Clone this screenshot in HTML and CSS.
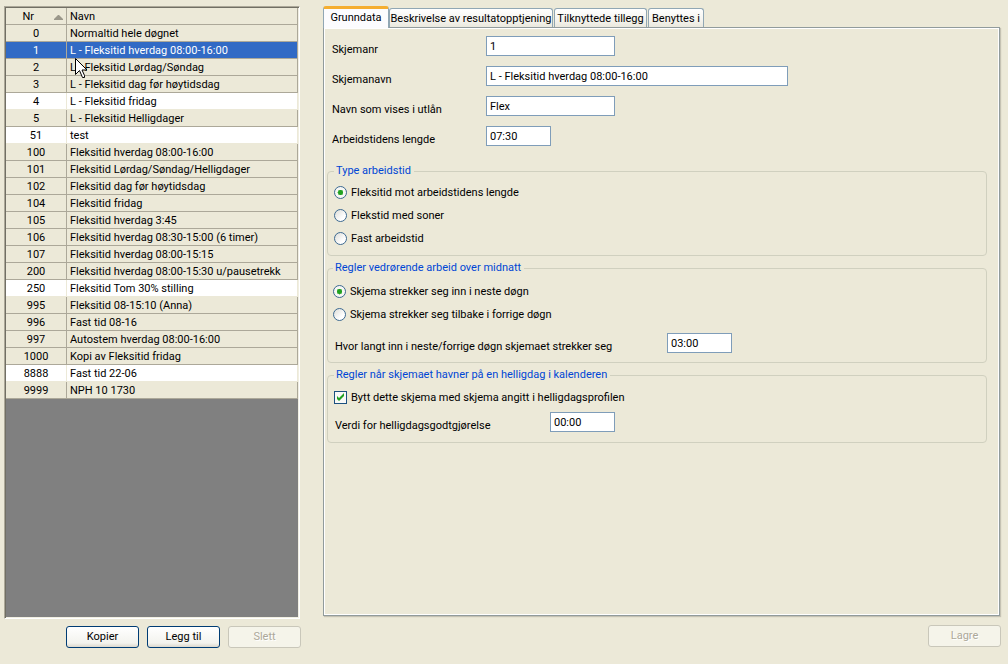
FILE: index.html
```html
<!DOCTYPE html>
<html lang="no">
<head>
<meta charset="utf-8">
<title>Arbeidstidsskjema</title>
<link rel="stylesheet" href="styles.css">
</head>
<body>
<main class="app">
  <section class="list-side">
    <div class="grid-frame">
      <table class="grid">
        <colgroup><col class="col-nr"><col></colgroup>
        <thead>
          <tr><th><span class="sort-head">Nr<svg class="sort" width="9" height="5" viewBox="0 0 9 5"><path d="M4 0h1l4 4v1H0V4z"/></svg></span></th><th class="name">Navn</th></tr>
        </thead>
        <tbody>
          <tr><td>0</td><td>Normaltid hele døgnet</td></tr>
          <tr class="selected"><td>1</td><td>L - Fleksitid hverdag 08:00-16:00</td></tr>
          <tr><td>2</td><td>L - Fleksitid Lørdag/Søndag</td></tr>
          <tr><td>3</td><td>L - Fleksitid dag før høytidsdag</td></tr>
          <tr class="open"><td>4</td><td>L - Fleksitid fridag</td></tr>
          <tr><td>5</td><td>L - Fleksitid Helligdager</td></tr>
          <tr class="open"><td>51</td><td>test</td></tr>
          <tr><td>100</td><td>Fleksitid hverdag 08:00-16:00</td></tr>
          <tr><td>101</td><td>Fleksitid Lørdag/Søndag/Helligdager</td></tr>
          <tr><td>102</td><td>Fleksitid dag før høytidsdag</td></tr>
          <tr><td>104</td><td>Fleksitid fridag</td></tr>
          <tr><td>105</td><td>Fleksitid hverdag 3:45</td></tr>
          <tr><td>106</td><td>Fleksitid hverdag 08:30-15:00 (6 timer)</td></tr>
          <tr><td>107</td><td>Fleksitid hverdag 08:00-15:15</td></tr>
          <tr><td>200</td><td>Fleksitid hverdag 08:00-15:30 u/pausetrekk</td></tr>
          <tr class="open"><td>250</td><td>Fleksitid Tom 30% stilling</td></tr>
          <tr><td>995</td><td>Fleksitid 08-15:10 (Anna)</td></tr>
          <tr><td>996</td><td>Fast tid 08-16</td></tr>
          <tr><td>997</td><td>Autostem hverdag 08:00-16:00</td></tr>
          <tr><td>1000</td><td>Kopi av Fleksitid fridag</td></tr>
          <tr class="open"><td>8888</td><td>Fast tid 22-06</td></tr>
          <tr><td>9999</td><td>NPH 10 1730</td></tr>
        </tbody>
      </table>
    </div>
    <div class="buttons">
      <button type="button">Kopier</button>
      <button type="button">Legg til</button>
      <button type="button" disabled>Slett</button>
    </div>
  </section>

  <section class="detail-side">
    <div class="tabs" role="tablist">
      <button class="tab active" type="button" role="tab" aria-selected="true">Grunndata</button>
      <button class="tab wide" type="button" role="tab">Beskrivelse av resultatopptjening</button>
      <button class="tab medium" type="button" role="tab">Tilknyttede tillegg</button>
      <button class="tab small" type="button" role="tab">Benyttes i</button>
    </div>
    <form class="panel">
      <div class="fields">
        <div class="field"><label for="nr">Skjemanr</label><input class="text mid" id="nr" type="text" value="1"></div>
        <div class="field"><label for="navn">Skjemanavn</label><input class="text long" id="navn" type="text" value="L - Fleksitid hverdag 08:00-16:00"></div>
        <div class="field"><label for="utlan">Navn som vises i utlån</label><input class="text mid" id="utlan" type="text" value="Flex"></div>
        <div class="field"><label for="lengde">Arbeidstidens lengde</label><input class="text" id="lengde" type="text" value="07:30"></div>
      </div>
      <fieldset class="type">
        <legend>Type arbeidstid</legend>
        <label class="choice"><input type="radio" name="type" checked>Fleksitid mot arbeidstidens lengde</label>
        <label class="choice"><input type="radio" name="type">Flekstid med soner</label>
        <label class="choice"><input type="radio" name="type">Fast arbeidstid</label>
      </fieldset>
      <fieldset class="midnight">
        <legend>Regler vedrørende arbeid over midnatt</legend>
        <label class="choice"><input type="radio" name="midnatt" checked>Skjema strekker seg inn i neste døgn</label>
        <label class="choice"><input type="radio" name="midnatt">Skjema strekker seg tilbake i forrige døgn</label>
        <div class="field span"><label for="inn">Hvor langt inn i neste/forrige døgn skjemaet strekker seg</label><input class="text" id="inn" type="text" value="03:00"></div>
      </fieldset>
      <fieldset class="holiday">
        <legend>Regler når skjemaet havner på en helligdag i kalenderen</legend>
        <label class="choice"><input type="checkbox" checked>Bytt dette skjema med skjema angitt i helligdagsprofilen</label>
        <div class="field value"><label for="verdi">Verdi for helligdagsgodtgjørelse</label><input class="text" id="verdi" type="text" value="00:00"></div>
      </fieldset>
    </form>
    <div class="buttons end">
      <button type="button" disabled>Lagre</button>
    </div>
  </section>
</main>
<svg class="pointer" width="13" height="21" viewBox="0 0 13 21"><path d="M.5.5v16l4-4 3 7h2l0-2-2.500-5.500h5z" fill="#fff" stroke="#000"/></svg>
</body>
</html>
```
FILE: styles.css
```css
* { box-sizing: border-box; }

body {
  margin: 0;
  background: #ece9d8;
  color: #000;
  font: 11px/14px Roboto, "Liberation Sans", sans-serif;
}

button, input { font: inherit; color: inherit; }

.app {
  display: flex;
  gap: 22px;
  min-height: 100vh;
  padding: 6px 7px 16px 4px;
}

.list-side {
  display: flex;
  flex-direction: column;
  flex: none;
  width: 297px;
}

.grid-frame {
  flex: 1;
  margin-right: 1px;
  border: 1px solid;
  border-color: #aca899 #fff #fff #aca899;
  box-shadow: inset 1px 1px #716f64, inset -1px -1px #f1efe2;
  background: #808080;
  padding: 1px;
}

.grid {
  width: 100%;
  table-layout: fixed;
  border-collapse: separate;
  border-spacing: 0;
  background: #ece9d8;
}

.col-nr { width: 61px; }

.grid th, .grid td {
  height: 17px;
  padding: 2px 3px 0;
  border: solid #aca899;
  border-width: 0 1px 1px 0;
  font-weight: normal;
  line-height: 14px;
  text-align: center;
  white-space: nowrap;
}

.grid td + td, .grid .name { text-align: left; }

.sort-head {
  display: flex;
  align-items: center;
  justify-content: flex-end;
  gap: 20px;
}

.sort { fill: #9a978a; }

.open td { background: #fff; border-color: #ece9d8; }
.selected td { background: #316ac5; color: #fff; }

.buttons {
  display: flex;
  justify-content: flex-end;
  gap: 8px;
  padding-top: 7px;
}

.buttons button {
  width: 73px;
  height: 22px;
  padding: 0;
  border: 1px solid #003c74;
  border-radius: 3px;
  background: linear-gradient(#fff, #f3f3ee 80%, #dcd8cd);
}

.buttons button:disabled {
  border-color: #c9c7ba;
  background: #f5f4ea;
  color: #aca899;
  text-shadow: 1px 1px #fff;
}

.detail-side {
  display: flex;
  flex-direction: column;
  flex: 1;
  min-width: 0;
}

.tabs {
  display: flex;
  align-items: flex-end;
  gap: 1px;
  height: 21px;
}

.tab {
  height: 19px;
  padding: 1px 0 0;
  border: 1px solid #91a7b4;
  border-bottom: 0;
  border-radius: 3px 3px 0 0;
  background: linear-gradient(#fff, #f5f4ef 60%, #eae8dd);
  white-space: nowrap;
}

.tab.active {
  z-index: 1;
  width: 66px;
  height: 22px;
  margin: 0 -1px -1px 0;
  padding: 0 0 1px;
  border-top: 3px solid #ffc73c;
  border-color: #f5ae30 #91a7b4 #91a7b4;
  background: #fcfcfe;
}

.wide { width: 164px; }
.medium { width: 93px; }
.small { width: 56px; }

.panel {
  flex: 1;
  margin-right: 1px;
  padding: 8px 12px 8px 3px;
  border: 1px solid #919b9c;
  box-shadow: inset 0 0 0 1px #fff, 1px 1px 1px #c5c2b3;
}

.end {
  padding-top: 9px;
  padding-bottom: 1px;
}

.fields {
  display: grid;
  gap: 9px;
  padding: 0 0 17px 5px;
}

.field { display: flex; align-items: flex-start; }
.field label { flex: none; width: 154px; padding-top: 7px; white-space: nowrap; }

.text {
  width: 65px;
  height: 20px;
  padding: 0 3px;
  border: 1px solid #7f9db9;
  background: #fff;
}

.mid { width: 129px; }
.long { width: 302px; }

fieldset {
  min-width: 0;
  margin: 0 0 5px;
  padding: 0 0 0 6px;
  border: 1px solid #d0d0bf;
  border-radius: 4px;
}

legend { padding: 0 3px 0 2px; color: #0046d5; }

.type { padding-top: 3px; padding-bottom: 5px; }
.midnight { padding-top: 5px; padding-bottom: 8px; padding-left: 5px; }
.holiday { padding-top: 4px; padding-bottom: 9px; }

.choice {
  display: flex;
  align-items: center;
  gap: 4px;
  height: 23px;
  white-space: nowrap;
}

.choice input {
  appearance: none;
  width: 13px;
  height: 13px;
  margin: 0;
  border: 1px solid #1c5180;
  background: linear-gradient(135deg, #dcdcd7, #fff 70%);
}

.choice input[type="radio"] { border-radius: 50%; border-color: #3d6a92; }

.choice input[type="radio"]:checked {
  background: radial-gradient(circle, #21a121 0 2px, #a5d8a0 3px, #f7f7f4 3px);
}

.choice input[type="checkbox"]:checked {
  background: url("data:image/svg+xml,%3Csvg xmlns='http://www.w3.org/2000/svg' viewBox='0 0 11 11'%3E%3Cpath d='M2 4v3l2 2 5-5V1L4 6z' fill='%2321a121'/%3E%3C/svg%3E") #f9f9f7;
}

.span { padding: 7px 0 0 2px; }
.span label { width: 332px; }
.value { padding: 3px 0 0 1px; }
.value label { width: 215px; }

.pointer {
  position: absolute;
  top: 58px;
  left: 75px;
}
```
